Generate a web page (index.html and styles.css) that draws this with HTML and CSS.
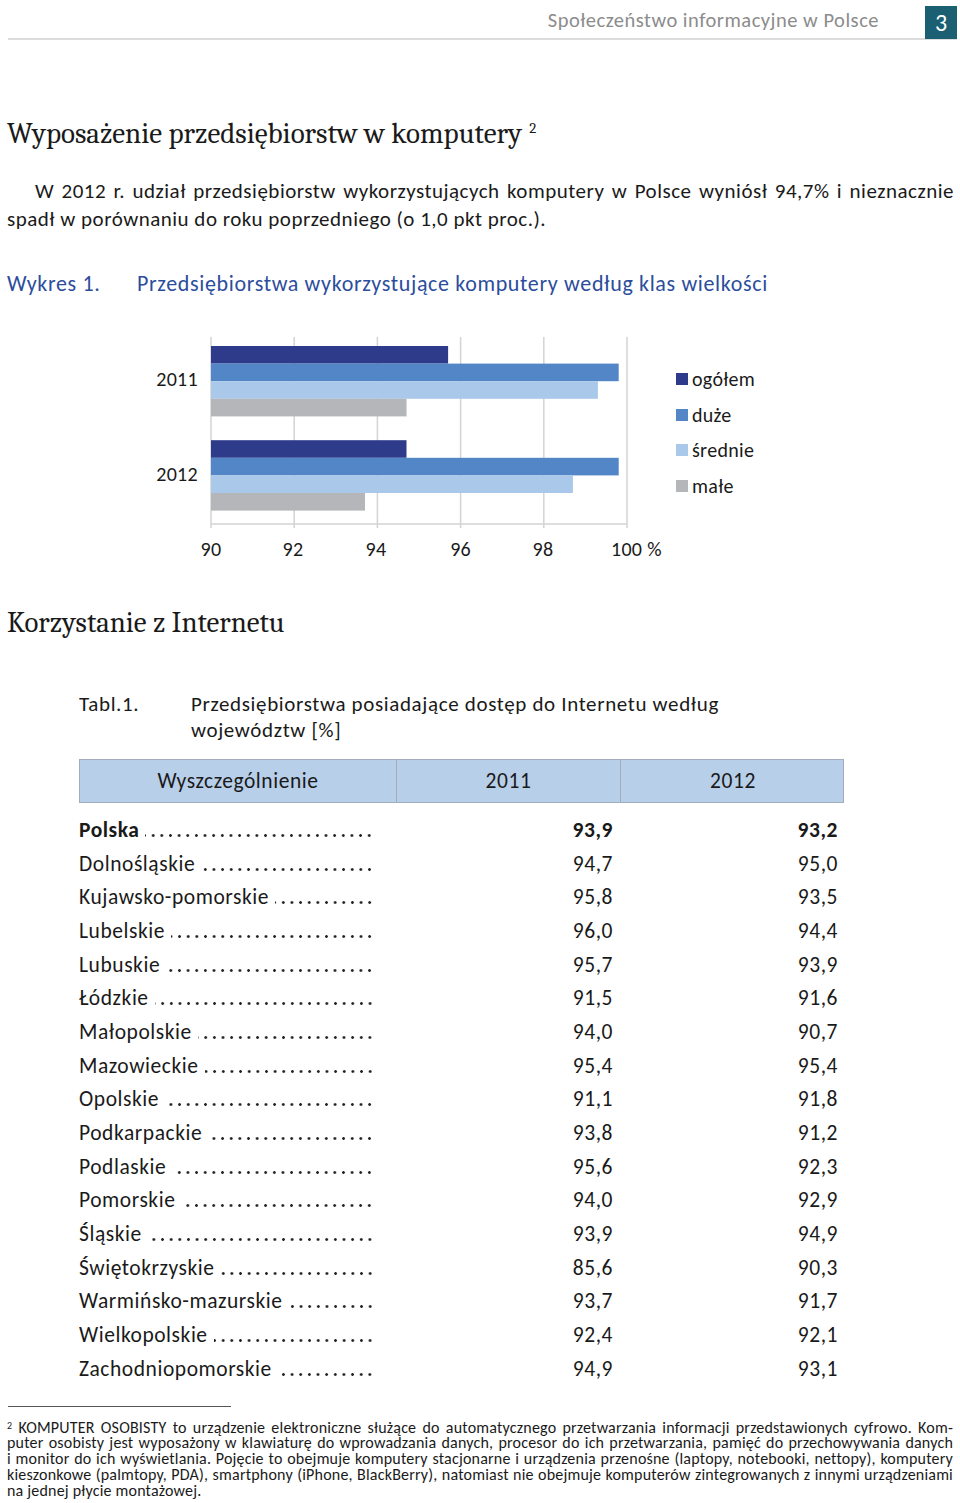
FILE: index.html
```html
<!DOCTYPE html>
<html lang="pl">
<head>
<meta charset="utf-8">
<title>Społeczeństwo informacyjne w Polsce</title>
<link rel="stylesheet" href="styles.css">
</head>
<body>
<div class="page">
  <header class="top">
    <span class="top-title">Społeczeństwo informacyjne w Polsce</span>
    <span class="page-no">3</span>
  </header>

  <h1 class="h-serif h-first">Wyposażenie przedsiębiorstw w komputery <sup>2</sup></h1>

  <p class="lead">W 2012 r. udział przedsiębiorstw wykorzystujących komputery w Polsce wyniósł 94,7% i nieznacznie spadł w porównaniu do roku poprzedniego (o 1,0 pkt proc.).</p>

  <div class="chart-title"><span class="ct-num">Wykres 1.</span><span>Przedsiębiorstwa wykorzystujące komputery według klas wielkości</span></div>

  <div class="chart">
    <svg width="630" height="240" viewBox="140 330 630 240" xmlns="http://www.w3.org/2000/svg">
      <g stroke="#d3d3d3" stroke-width="1.5">
        <line x1="211" y1="337" x2="211" y2="528"/>
        <line x1="294.2" y1="337" x2="294.2" y2="528"/>
        <line x1="377.4" y1="337" x2="377.4" y2="528"/>
        <line x1="460.6" y1="337" x2="460.6" y2="528"/>
        <line x1="543.8" y1="337" x2="543.8" y2="528"/>
        <line x1="627" y1="337" x2="627" y2="528"/>
        <line x1="211" y1="524" x2="627" y2="524"/>
      </g>
      <rect x="211" y="346" width="237.1" height="17.6" fill="#2e3a8a"/>
      <rect x="211" y="363.6" width="407.7" height="17.6" fill="#5286c6"/>
      <rect x="211" y="381.2" width="386.9" height="17.6" fill="#a9c8ea"/>
      <rect x="211" y="398.8" width="195.5" height="17.6" fill="#b4b6b9"/>
      <rect x="211" y="440.2" width="195.5" height="17.6" fill="#2e3a8a"/>
      <rect x="211" y="457.8" width="407.7" height="17.6" fill="#5286c6"/>
      <rect x="211" y="475.4" width="361.9" height="17.6" fill="#a9c8ea"/>
      <rect x="211" y="493" width="154" height="17.6" fill="#b4b6b9"/>
      <g class="svg-text">
        <text x="198" y="386" text-anchor="end">2011</text>
        <text x="198" y="481" text-anchor="end">2012</text>
        <text x="211" y="556" text-anchor="middle">90</text>
        <text x="293" y="556" text-anchor="middle">92</text>
        <text x="376" y="556" text-anchor="middle">94</text>
        <text x="460.6" y="556" text-anchor="middle">96</text>
        <text x="543" y="556" text-anchor="middle">98</text>
        <text x="611" y="556">100 %</text>
      </g>
      <rect x="676" y="373" width="12" height="12" fill="#2e3a8a"/>
      <rect x="676" y="409" width="12" height="12" fill="#5286c6"/>
      <rect x="676" y="444" width="12" height="12" fill="#a9c8ea"/>
      <rect x="676" y="480" width="12" height="12" fill="#b4b6b9"/>
      <g class="svg-text">
        <text x="692" y="386">ogółem</text>
        <text x="692" y="422">duże</text>
        <text x="692" y="457">średnie</text>
        <text x="692" y="493">małe</text>
      </g>
    </svg>
  </div>

  <h2 class="h-serif h-second">Korzystanie z Internetu</h2>

  <div class="table-title"><span class="tt-num">Tabl.1.</span><span class="tt-text">Przedsiębiorstwa posiadające dostęp do Internetu według województw [%]</span></div>

  <div class="tbl">
    <div class="thead">
      <div class="th">Wyszczególnienie</div>
      <div class="th">2011</div>
      <div class="th">2012</div>
    </div>
    <div class="tbody">
      <div class="row bold"><div class="name"><span>Polska</span><span class="dots"></span></div><div class="val">93,9</div><div class="val">93,2</div></div>
      <div class="row"><div class="name"><span>Dolnośląskie</span><span class="dots"></span></div><div class="val">94,7</div><div class="val">95,0</div></div>
      <div class="row"><div class="name"><span>Kujawsko-pomorskie</span><span class="dots"></span></div><div class="val">95,8</div><div class="val">93,5</div></div>
      <div class="row"><div class="name"><span>Lubelskie</span><span class="dots"></span></div><div class="val">96,0</div><div class="val">94,4</div></div>
      <div class="row"><div class="name"><span>Lubuskie</span><span class="dots"></span></div><div class="val">95,7</div><div class="val">93,9</div></div>
      <div class="row"><div class="name"><span>Łódzkie</span><span class="dots"></span></div><div class="val">91,5</div><div class="val">91,6</div></div>
      <div class="row"><div class="name"><span>Małopolskie</span><span class="dots"></span></div><div class="val">94,0</div><div class="val">90,7</div></div>
      <div class="row"><div class="name"><span>Mazowieckie</span><span class="dots"></span></div><div class="val">95,4</div><div class="val">95,4</div></div>
      <div class="row"><div class="name"><span>Opolskie</span><span class="dots"></span></div><div class="val">91,1</div><div class="val">91,8</div></div>
      <div class="row"><div class="name"><span>Podkarpackie</span><span class="dots"></span></div><div class="val">93,8</div><div class="val">91,2</div></div>
      <div class="row"><div class="name"><span>Podlaskie</span><span class="dots"></span></div><div class="val">95,6</div><div class="val">92,3</div></div>
      <div class="row"><div class="name"><span>Pomorskie</span><span class="dots"></span></div><div class="val">94,0</div><div class="val">92,9</div></div>
      <div class="row"><div class="name"><span>Śląskie</span><span class="dots"></span></div><div class="val">93,9</div><div class="val">94,9</div></div>
      <div class="row"><div class="name"><span>Świętokrzyskie</span><span class="dots"></span></div><div class="val">85,6</div><div class="val">90,3</div></div>
      <div class="row"><div class="name"><span>Warmińsko-mazurskie</span><span class="dots"></span></div><div class="val">93,7</div><div class="val">91,7</div></div>
      <div class="row"><div class="name"><span>Wielkopolskie</span><span class="dots"></span></div><div class="val">92,4</div><div class="val">92,1</div></div>
      <div class="row"><div class="name"><span>Zachodniopomorskie</span><span class="dots"></span></div><div class="val">94,9</div><div class="val">93,1</div></div>
    </div>
  </div>

  <div class="fn-rule"></div>
  <div class="footnote">
    <span class="fl"><sup>2</sup> KOMPUTER OSOBISTY to urządzenie elektroniczne służące do automatycznego przetwarzania informacji przedstawionych cyfrowo. Kom-</span>
    <span class="fl">puter osobisty jest wyposażony w klawiaturę do wprowadzania danych, procesor do ich przetwarzania, pamięć do przechowywania danych</span>
    <span class="fl">i monitor do ich wyświetlania. Pojęcie to obejmuje komputery stacjonarne i urządzenia przenośne (laptopy, notebooki, nettopy), komputery</span>
    <span class="fl">kieszonkowe (palmtopy, PDA), smartphony (iPhone, BlackBerry), natomiast nie obejmuje komputerów zintegrowanych z innymi urządzeniami</span>
    <span class="fl last">na jednej płycie montażowej.</span>
  </div>
</div>
</body>
</html>
```

FILE: styles.css
```css
html, body {
  margin: 0;
  padding: 0;
  background: #fff;
}
body {
  font-family: "Carlito", "Lato", "Open Sans", sans-serif;
  color: #1a1a1a;
  font-size: 21px;
}
.page {
  width: 960px;
  height: 1503px;
  overflow: hidden;
}
.top {
  display: flex;
  justify-content: flex-end;
  align-items: center;
  height: 38px;
  margin: 0 3px 0 8px;
  border-bottom: 2px solid #dcdcdc;
}
.top-title {
  color: #8c8c8c;
  font-size: 20.5px;
  letter-spacing: 0.5px;
  margin-right: 46px;
  margin-top: 2px;
}
.page-no {
  align-self: flex-end;
  width: 32px;
  height: 33px;
  background: #1b6072;
  color: #fff;
  font-size: 24px;
  display: flex;
  align-items: center;
  justify-content: center;
  margin-bottom: -1px;
}
.h-serif {
  font-family: "Caladea", "Liberation Serif", "DejaVu Serif", serif;
  font-weight: normal;
  font-size: 29px;
  color: #1a1a1a;
  margin: 0;
  line-height: 32px;
}
.h-serif sup {
  font-size: 15px;
  vertical-align: 10px;
  line-height: 0;
  margin-left: 1px;
}
.h-first {
  margin: 78px 0 0 7px;
}
.lead {
  margin: 27px 6px 0 7px;
  text-indent: 28px;
  line-height: 28px;
  font-size: 21px;
  letter-spacing: 0.5px;
  text-align: justify;
}
.chart-title {
  display: flex;
  color: #2b4d9c;
  margin: 37px 0 0 7px;
  line-height: 28px;
  font-size: 22px;
  letter-spacing: 0.65px;
}
.ct-num {
  width: 130px;
}
.chart {
  margin: 32px 0 0 140px;
  height: 240px;
}
.chart svg {
  display: block;
}
.svg-text text {
  font-family: "Carlito", "Lato", "Open Sans", sans-serif;
  font-size: 20px;
  letter-spacing: 0.3px;
  fill: #1a1a1a;
}
.h-second {
  margin: 37px 0 0 7px;
  font-size: 28.8px;
}
.table-title {
  display: flex;
  margin: 52px 0 0 79px;
  line-height: 26px;
  width: 660px;
  font-size: 21px;
  letter-spacing: 0.65px;
}
.tt-num {
  width: 112px;
  flex: none;
}
.tt-text {
  flex: 1;
}
.tbl {
  margin: 16px 0 0 79px;
  width: 765px;
  font-size: 21.5px;
  letter-spacing: 0.55px;
}
.thead {
  display: grid;
  grid-template-columns: 316px 224px 225px;
  background: #b8cfea;
  border: 1px solid #a3adbd;
  height: 42px;
}
.th {
  display: flex;
  align-items: center;
  justify-content: center;
}
.th + .th {
  border-left: 1px solid #a3adbd;
}
.tbody {
  margin-top: 10px;
}
.row {
  display: grid;
  grid-template-columns: 316px 224px 225px;
  height: 33.7px;
  align-items: center;
}
.name {
  display: flex;
  align-items: baseline;
  width: 295px;
  white-space: nowrap;
}
.dots {
  flex: 1;
  display: inline-block;
  height: 3px;
  margin-left: 6px;
  background-image: radial-gradient(circle at center, #222 1.1px, rgba(0,0,0,0) 1.6px);
  background-size: 8.65px 3px;
  background-position: right bottom;
  background-repeat: repeat-x;
}
.val {
  text-align: right;
  padding-right: 6px;
}
.bold {
  font-weight: bold;
}
.fn-rule {
  width: 223px;
  height: 1px;
  background: #555;
  margin: 20px 0 0 8px;
}
.footnote {
  margin: 13px 7px 0 7px;
  font-size: 16px;
  letter-spacing: 0.2px;
  line-height: 15.75px;
}
.fl {
  display: block;
  white-space: nowrap;
  text-align: justify;
  text-align-last: justify;
}
.fl.last {
  text-align: left;
  text-align-last: left;
}
.footnote sup {
  font-size: 10px;
  vertical-align: 4px;
  line-height: 0;
}
```
